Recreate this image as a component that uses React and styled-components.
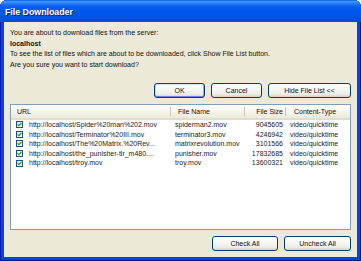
import React from "react";
import styled, { createGlobalStyle, css } from "styled-components";

const Global = createGlobalStyle`
  html, body {
    margin: 0;
    padding: 0;
    background: #fff;
  }
  * {
    box-sizing: border-box;
  }
`;

const Window = styled.div`
  width: 361px;
  height: 261px;
  display: flex;
  flex-direction: column;
  background: #0842da;
  border-radius: 7px 7px 0 0;
  overflow: hidden;
  box-shadow: inset 1px 0 0 #0019b0, inset -1px 0 0 #001a8f,
    inset 0 -1px 0 #00137f;
  font-family: "Liberation Sans", Arial, sans-serif;
  color: #000;
`;

const TitleBar = styled.div`
  height: 22px;
  flex: none;
  display: flex;
  align-items: center;
  padding: 1px 0 0 5px;
  background: linear-gradient(
    180deg,
    #0a5ae8 0,
    #3d95ff 1.5px,
    #2e83fa 3px,
    #0d61ee 6px,
    #0058ee 10px,
    #0055ea 16px,
    #0050df 20px,
    #0046d4 22px
  );
  color: #fff;
  font-weight: bold;
  font-size: 8.8px;
  text-shadow: 1px 1px 0 #0a1e8c;
`;

const Body = styled.div`
  flex: 1;
  margin: 0 4px 4px 4px;
  padding: 6px 6px 6px 6px;
  background: #ece9d8;
  display: flex;
  flex-direction: column;
  font-size: 7px;
  color: #111;
`;

const Line = styled.div`
  line-height: 10.5px;
  height: 10.5px;
  white-space: nowrap;
  font-weight: ${(p) => (p.$bold ? "bold" : "normal")};
`;

const ButtonRow = styled.div`
  display: flex;
  justify-content: flex-end;
  gap: 6px;
  margin-top: ${(p) => p.$top}px;
`;

const Button = styled.button`
  width: ${(p) => p.$w}px;
  height: 15px;
  padding: 0;
  border: 1px solid #003c74;
  border-radius: 3px;
  background: linear-gradient(180deg, #ffffff 0%, #f4f4ef 55%, #ecebe4 80%, #d6d0c5 100%);
  font-family: inherit;
  font-size: 7px;
  color: #111;
  ${(p) =>
    p.$default &&
    css`
      box-shadow: inset 0 1px 0 #cee7ff, inset 0 -1px 0 #6982ee,
        inset 1px 0 0 #b8d4f8, inset -1px 0 0 #89ade4;
    `}
`;

const ListView = styled.div`
  margin-top: 6px;
  height: 126px;
  border: 1px solid #7f9db9;
  background: #fff;
  display: flex;
  flex-direction: column;
`;

const cols = "160px 74px 41px 1fr";

const HeaderRow = styled.div`
  display: grid;
  grid-template-columns: ${cols};
  height: 15px;
  background: linear-gradient(180deg, #ffffff 0%, #f6f5ef 50%, #ebeadb 100%);
  border-bottom: 2px solid #e2decd;
`;

const HeaderCell = styled.div`
  display: flex;
  align-items: center;
  justify-content: ${(p) => (p.$right ? "flex-end" : "flex-start")};
  padding: 0 ${(p) => (p.$right ? 3 : 0)}px 0 ${(p) => p.$pad}px;
  background-image: ${(p) =>
    p.$last ? "none" : "linear-gradient(#c7c5b2, #c7c5b2)"};
  background-size: 1px 9px;
  background-position: right center;
  background-repeat: no-repeat;
  white-space: nowrap;
`;

const Row = styled.div`
  display: grid;
  grid-template-columns: ${cols};
  height: 9.6px;
  line-height: 9.6px;
`;

const Cell = styled.div`
  display: flex;
  align-items: center;
  gap: 6px;
  padding: 0 ${(p) => (p.$right ? 3 : 0)}px 0 ${(p) => p.$pad ?? 4}px;
  justify-content: ${(p) => (p.$right ? "flex-end" : "flex-start")};
  white-space: nowrap;
  overflow: hidden;
  color: #222;
`;

const Box = styled.span`
  width: 7px;
  height: 7px;
  flex: none;
  border: 1px solid #1c5180;
  background: linear-gradient(135deg, #dcdcd7 0%, #f2f2ef 60%, #ffffff 100%);
  display: flex;
  align-items: center;
  justify-content: center;
`;

function Checkbox() {
  return (
    <Box>
      <svg width="5" height="5" viewBox="0 0 5 5">
        <path d="M0.6 2.4 L1.9 3.7 L4.4 1" fill="none" stroke="#21a121" strokeWidth="1.2" />
      </svg>
    </Box>
  );
}

const files = [
  ["http://localhost/Spider%20man%202.mov", "spiderman2.mov", "9045605"],
  ["http://localhost/Terminator%20III.mov", "terminator3.mov", "4246942"],
  ["http://localhost/The%20Matrix.%20Rev...", "matrixrevolution.mov", "3101566"],
  ["http://localhost/the_punisher-tlr_m480....", "punisher.mov", "17832685"],
  ["http://localhost/troy.mov", "troy.mov", "13600321"],
];

export default function App() {
  return (
    <>
      <Global />
      <Window>
        <TitleBar>File Downloader</TitleBar>
        <Body>
          <Line>You are about to download files from the server:</Line>
          <Line $bold>localhost</Line>
          <Line>
            To see the list of files which are about to be downloaded, click Show File List button.
          </Line>
          <Line>Are you sure you want to start download?</Line>
          <ButtonRow $top={13}>
            <Button $w={51} $default>OK</Button>
            <Button $w={51}>Cancel</Button>
            <Button $w={83}>Hide File List &lt;&lt;</Button>
          </ButtonRow>
          <ListView>
            <HeaderRow>
              <HeaderCell $pad={6}>URL</HeaderCell>
              <HeaderCell $pad={7}>File Name</HeaderCell>
              <HeaderCell $pad={0} $right>File Size</HeaderCell>
              <HeaderCell $pad={8} $last>Content-Type</HeaderCell>
            </HeaderRow>
            {files.map(([url, name, size]) => (
              <Row key={url}>
                <Cell $pad={5}>
                  <Checkbox />
                  {url}
                </Cell>
                <Cell>{name}</Cell>
                <Cell $pad={0} $right>{size}</Cell>
                <Cell>video/quicktime</Cell>
              </Row>
            ))}
          </ListView>
          <ButtonRow $top={6}>
            <Button $w={66}>Check All</Button>
            <Button $w={67}>Uncheck All</Button>
          </ButtonRow>
        </Body>
      </Window>
    </>
  );
}
